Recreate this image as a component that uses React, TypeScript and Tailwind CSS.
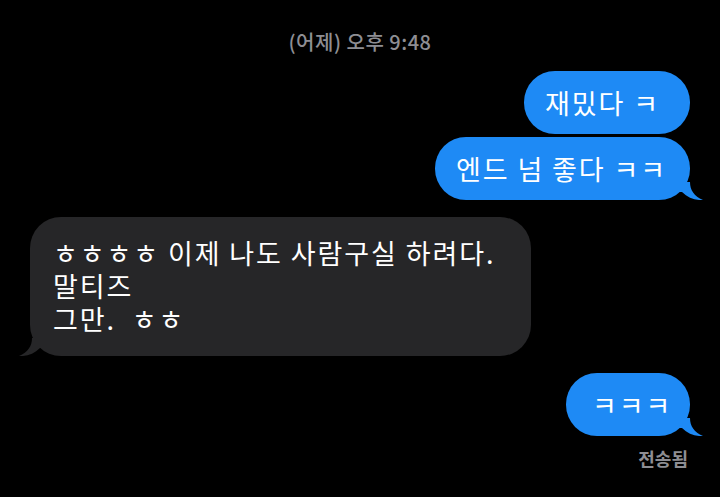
import React from 'react';

const FONT = "font-['Noto_Sans_CJK_KR',sans-serif]";

const RightTail = ({ color }: { color: string }) => (
  <svg
    className="absolute right-[-13px] bottom-0"
    width="24"
    height="18"
    viewBox="0 0 24 18"
    fill={color}
  >
    <path d="M0 0 H11 C11 8 15 14 24 18 C16 18.5 9 16 3 10 L0 10 Z" />
  </svg>
);

const LeftTail = ({ color }: { color: string }) => (
  <svg
    className="absolute left-[-11px] bottom-0"
    width="24"
    height="18"
    viewBox="0 0 24 18"
    fill={color}
  >
    <path d="M24 0 H13 C13 8 9 14 0 18 C8 18.5 15 16 21 10 L24 10 Z" />
  </svg>
);

const Sent = ({
  text,
  width,
  tail,
  pl,
}: {
  text: string;
  width: string;
  tail?: boolean;
  pl: string;
}) => (
  <div className="flex justify-end pr-[30px]">
    <div
      className={`relative ${width} ${pl} rounded-[31px] bg-[#1e8af5] py-[14px] text-[27px] leading-[35px] tracking-[1.9px] text-white whitespace-nowrap`}
    >
      {text}
      {tail && <RightTail color="#1e8af5" />}
    </div>
  </div>
);

export default function App() {
  return (
    <div className={`${FONT} w-[720px] h-[497px] bg-black overflow-hidden flex flex-col`}>
      {/* Timestamp */}
      <div className="mt-[30px] text-center text-[20px] leading-[24px] font-medium tracking-[0.5px] text-[#8e8e93]">
        (어제) 오후 9:48
      </div>

      <div className="mt-[17px]">
        <Sent text="재밌다 ㅋ" width="w-[166px]" pl="pl-[21px]" />
      </div>
      <div className="mt-[3px]">
        <Sent text="엔드 넘 좋다 ㅋㅋ" width="w-[255px]" pl="pl-[21px]" tail />
      </div>

      {/* Received */}
      <div className="mt-[17px] pl-[30px]">
        <div className="relative w-[501px] rounded-[31px] bg-[#262628] pl-[23px] pt-[19px] pb-[21px] text-[27px] leading-[33px] tracking-[1.9px] text-white whitespace-nowrap">
          <div>ㅎㅎㅎㅎ 이제 나도 사람구실 하려다.</div>
          <div>말티즈</div>
          <div>그만.&nbsp; ㅎㅎ</div>
          <LeftTail color="#262628" />
        </div>
      </div>

      <div className="mt-[17px]">
        <Sent text="ㅋㅋㅋ" width="w-[124px]" pl="pl-[26px]" tail />
      </div>

      <div className="mt-[11px] pr-[32px] text-right text-[18px] leading-[22px] font-semibold text-[#8e8e93]">
        전송됨
      </div>
    </div>
  );
}
